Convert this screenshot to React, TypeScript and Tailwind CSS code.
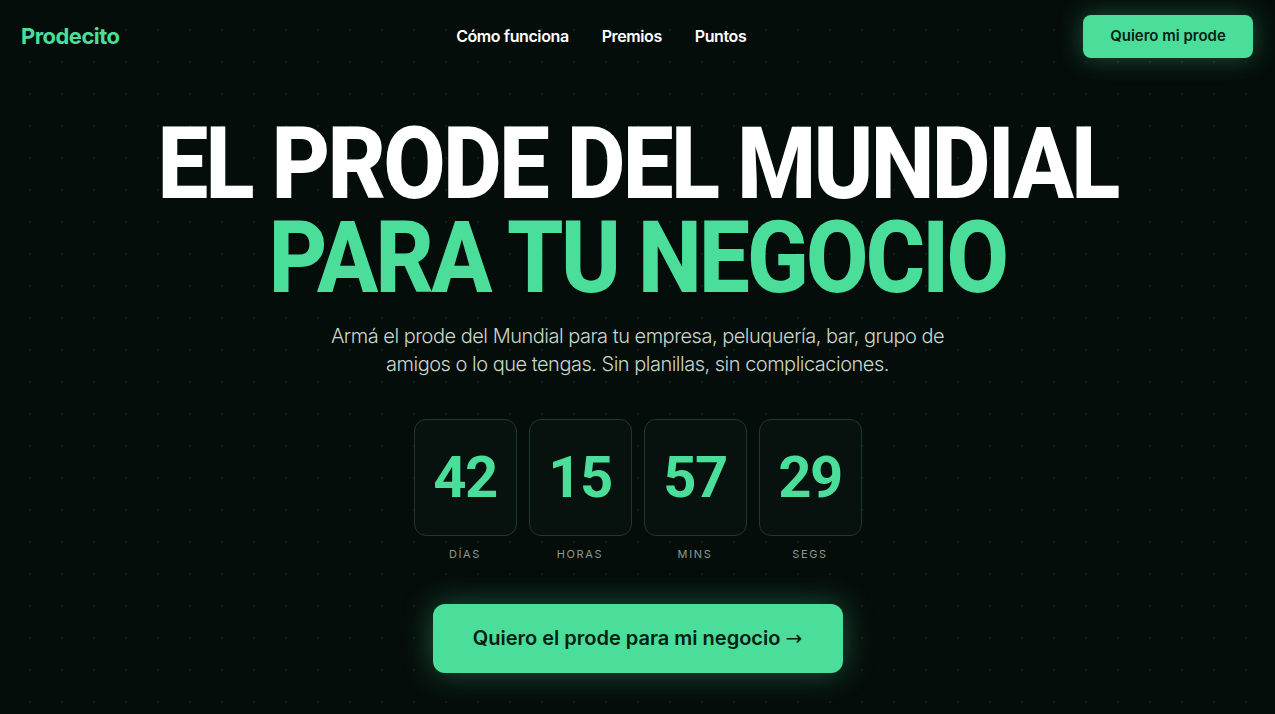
const units = [
  { value: "42", label: "DÍAS" },
  { value: "15", label: "HORAS" },
  { value: "57", label: "MINS" },
  { value: "29", label: "SEGS" },
];

export default function App() {
  return (
    <div className="min-h-[714px] w-full bg-[#050d0a] bg-[radial-gradient(rgba(255,255,255,0.06)_1px,transparent_1.5px)] bg-[size:32px_32px] bg-[position:14px_14px] font-['Inter',sans-serif] text-white">
      <header className="flex h-[72px] items-center justify-between pl-[21px] pr-[22px]">
        <div className="text-[22px] font-bold tracking-tight text-[#4ade9a]">Prodecito</div>
        <nav className="flex items-center gap-[33px] text-[16px] font-semibold tracking-tight text-white">
          <a>Cómo funciona</a>
          <a>Premios</a>
          <a>Puntos</a>
        </nav>
        <button className="h-[43px] w-[170px] rounded-lg bg-[#4ade9a] text-[15px] font-semibold text-[#062014] shadow-[0_0_24px_rgba(74,222,154,0.35)]">
          Quiero mi prode
        </button>
      </header>

      <main className="flex flex-col items-center">
        <h1 className="mt-[45px] scale-x-[0.905] text-center font-['Roboto',sans-serif] text-[100px] font-extrabold leading-[94px] tracking-[-0.03em]">
          <span className="block text-white">EL PRODE DEL MUNDIAL</span>
          <span className="block text-[#4ade9a]">PARA TU NEGOCIO</span>
        </h1>

        <p className="mt-[17px] w-[640px] text-center text-[20px] font-light leading-[28px] tracking-tight text-[#c9d6cc]">
          Armá el prode del Mundial para tu empresa, peluquería, bar, grupo de amigos o lo que tengas. Sin planillas, sin complicaciones.
        </p>

        <div className="mt-[41px] flex gap-[12px]">
          {units.map((u) => (
            <div key={u.label} className="flex flex-col items-center">
              <div className="flex h-[117px] w-[103px] items-center justify-center rounded-xl border border-[#1c3a2c] bg-[#07120e]">
                <span className="font-['Roboto',sans-serif] text-[58px] font-bold tracking-tight text-[#4ade9a]">{u.value}</span>
              </div>
              <span className="mt-[10px] text-[11px] tracking-[0.15em] text-[#8b9a91]">{u.label}</span>
            </div>
          ))}
        </div>

        <button className="mt-[41px] h-[69px] w-[410px] rounded-xl bg-[#4ade9a] text-[20px] font-semibold text-[#062014] shadow-[0_0_30px_rgba(74,222,154,0.35)]">
          Quiero el prode para mi negocio <span className="font-['DejaVu_Sans',sans-serif] font-normal">→</span>
        </button>
      </main>
    </div>
  );
}
